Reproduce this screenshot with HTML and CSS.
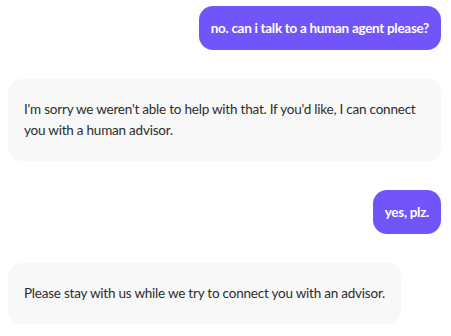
FILE: index.html
```html
<!DOCTYPE html>
<html lang="en">
<head>
<meta charset="utf-8">
<link rel="stylesheet" href="styles.css">
</head>
<body>
<div class="chat">
  <div class="msg user">no. can i talk to a human agent please?</div>
  <div class="msg bot">I'm sorry we weren't able to help with that. If you'd like, I can connect you with a human advisor.</div>
  <div class="msg user">yes, plz.</div>
  <div class="msg bot">Please stay with us while we try to connect you with an advisor.</div>
</div>
</body>
</html>
```
FILE: styles.css
```css
html, body {
  margin: 0;
  padding: 0;
  background: #ffffff;
}
body {
  font-family: "Lato", "Open Sans", sans-serif;
  font-size: 13.5px;
  letter-spacing: -0.22px;
  color: #2c2c2c;
}
.chat {
  display: flex;
  flex-direction: column;
  align-items: flex-start;
  gap: 29px;
  padding: 6px 10px 0 8px;
}
.msg {
  box-sizing: border-box;
  border-radius: 14px;
  line-height: 20px;
}
.user {
  align-self: flex-end;
  background: #7155fa;
  color: #ffffff;
  font-weight: 700;
  letter-spacing: -0.3px;
  padding: 12px 12px;
}
.bot {
  background: #f8f8f8;
  padding: 20px 16px;
  line-height: 21px;
}
```
